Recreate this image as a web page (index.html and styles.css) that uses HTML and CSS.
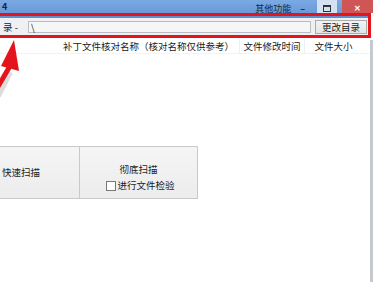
FILE: index.html
```html
<!DOCTYPE html>
<html>
<head>
<meta charset="utf-8">
<link rel="stylesheet" href="styles.css">
</head>
<body>
<div class="win">
  <div class="titlebar">
    <span class="tnum">4</span>
    <span class="ttitle">其他功能</span>
    <span class="tmin">–</span>
    <span class="tmax"><span class="maxbox"></span></span>
    <span class="tclose">✕</span>
  </div>
  <div class="annot">
    <div class="bluestrip"></div>
    <div class="toolbar">
      <span class="lbl">录 - </span>
      <div class="field">\</div>
      <div class="btn">更改目录</div>
    </div>
  </div>
  <div class="content">
    <div class="list">
      <div class="header">
        <div class="col c0"></div>
        <div class="col c1">补丁文件核对名称（核对名称仅供参考）</div>
        <div class="col c2">文件修改时间</div>
        <div class="col c3">文件大小</div>
      </div>
      <div class="blank"></div>
      <div class="actions">
        <div class="abtn quick"><span>快速扫描</span></div>
        <div class="abtn full">
          <span>彻底扫描</span>
          <label class="chk"><span class="box"></span>进行文件检验</label>
        </div>
      </div>
    </div>
    <div class="rborder"></div>
  </div>
  <svg class="arrow" width="50" height="70" viewBox="0 0 50 70">
    <path d="M-2 58 L10 34" stroke="#9a9a9a" stroke-opacity="0.35" stroke-width="6" fill="none"/>
    <path d="M-4 52 L10 28" stroke="#e3141b" stroke-width="5" fill="none"/>
    <path d="M14 2 L1 28 L19 33 Z" fill="#e3141b"/>
  </svg>
</div>
</body>
</html>
```
FILE: styles.css
```css
* { box-sizing: border-box; }
html, body { margin: 0; padding: 0; }
body {
  width: 373px;
  height: 282px;
  overflow: hidden;
  background: #ffffff;
  font-family: "Noto Sans CJK SC", "Noto Sans", sans-serif;
  font-size: 9.5px;
  color: #1a1a1a;
}
.win { position: relative; width: 373px; height: 282px; }
.titlebar {
  height: 13px;
  background: linear-gradient(#7aa9e3, #6a9ad8);
  display: flex;
  align-items: center;
  position: relative;
}
.tnum { margin-left: 2px; font-weight: bold; font-size: 9px; color: #17283d; }
.ttitle { margin-left: 248px; font-size: 9px; color: #17283d; line-height: 13px; padding-top: 3px; }
.tmin { margin-left: 9px; width: 8px; font-size: 9px; color: #1c2c44; font-weight: bold; padding-top: 4px; }
.tmax {
  margin-left: 9px;
  width: 20px;
  height: 13px;
  background: #d4e1f1;
  display: flex;
  align-items: center;
  justify-content: center;
}
.maxbox { width: 8px; height: 7px; border: 1px solid #333; border-top-width: 2px; margin-top: 3px; }
.tclose {
  margin-left: 5px;
  flex: 1;
  height: 13px;
  background: #cf5654;
  color: #fff;
  font-size: 8px;
  font-weight: bold;
  text-align: center;
  line-height: 16px;
}
.annot {
  margin-left: -3px;
  width: 374px;
  height: 25px;
  border: 3px solid #e3141b;
  display: flex;
  flex-direction: column;
}
.bluestrip { height: 2px; background: #5f8ec8; }
.toolbar {
  flex: 1;
  background: #eef0f3;
  display: flex;
  align-items: center;
  padding-left: 3px;
}
.lbl { width: 25px; white-space: pre; line-height: 12px; }
.field {
  width: 283px;
  height: 12px;
  border: 1px solid #b9bcc1;
  background: #f6f6f6;
  line-height: 10px;
  padding-left: 2px;
}
.btn {
  margin-left: 4px;
  width: 52px;
  height: 14px;
  border: 1px solid #a9abae;
  background: linear-gradient(#f3f3f3, #e4e4e4);
  text-align: center;
  line-height: 12px;
}
.content { display: flex; height: 244px; }
.list { flex: 1; display: flex; flex-direction: column; }
.rborder { width: 3px; background: #c6c9cd; margin-top: 2px; }
.header {
  margin-top: 1px;
  height: 15px;
  display: flex;
  line-height: 15px;
  border-bottom: 1px solid #f3f3f3;
}
.col { text-align: center; white-space: nowrap; border-right: 1px solid #f0f0f0; }
.c0 { width: 58px; border-right: none; }
.c1 { width: 182px; }
.c2 { width: 65px; }
.c3 { width: 57px; border-right: none; }
.blank { height: 92px; }
.actions { display: flex; margin-left: -38px; }
.abtn {
  width: 118px;
  height: 53px;
  border: 1px solid #c9c9c9;
  background: linear-gradient(#f5f5f5, #ececec);
  display: flex;
  flex-direction: column;
  align-items: center;
  justify-content: center;
  line-height: 11px;
}
.abtn + .abtn { border-left: none; }
.full { padding-top: 10px; }
.chk { display: flex; align-items: center; margin-top: 5px; margin-left: 4px; }
.box { width: 10px; height: 10px; border: 1px solid #777; background: #fff; margin-right: 1px; }
.arrow { position: absolute; left: 0; top: 38px; }
```
